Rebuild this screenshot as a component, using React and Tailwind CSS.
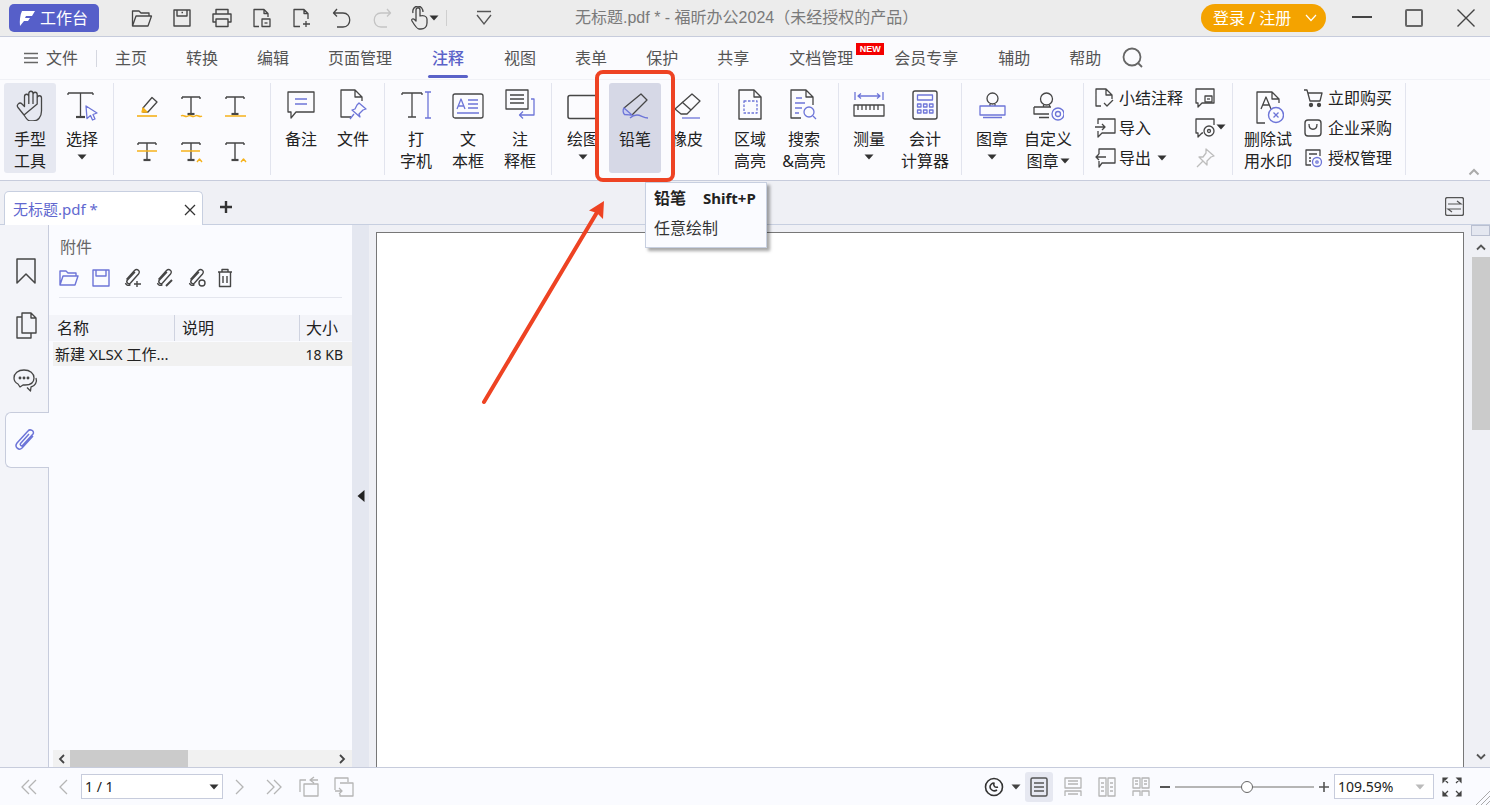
import React from 'react';

const C = '#464646', B = '#6d75d8', O = '#f6b21b';

function S({ w = 32, h = 32, sw = 1.3, stroke = C, children }) {
  return (
    <svg width={w} height={h} viewBox={`0 0 ${w} ${h}`} fill="none" stroke={stroke} strokeWidth={sw} strokeLinejoin="round" className="block shrink-0">
      {children}
    </svg>
  );
}

const Caret = ({ c = '#333' }) => (
  <svg width="10" height="6" viewBox="0 0 10 6" className="block shrink-0"><path d="M0.5 0.5H9.5L5 5.5Z" fill={c} /></svg>
);

const Sep = () => <div className="w-px h-[92px] bg-[#e2e4ee] shrink-0" />;

function Btn({ icon, lines = [], caret, active, hover, w = 'w-[52px]', inlineCaret }) {
  return (
    <div className={`${w} h-[90px] shrink-0 flex flex-col items-center rounded-[3px] ${active ? 'bg-[#e6e8f1]' : ''} ${hover ? 'bg-[#d6d8e6]' : ''}`}>
      <div className="h-[45px] pt-[6px] shrink-0">{icon}</div>
      {lines.map((l, i) => (
        <div key={i} className="h-[22px] leading-[22px] text-[16px] text-[#222] whitespace-nowrap flex items-center gap-[1px]">
          {l}{inlineCaret && i === lines.length - 1 ? <Caret /> : null}
        </div>
      ))}
      {caret ? <div className="mt-[4px]"><Caret /></div> : null}
    </div>
  );
}

function TIcon({ deco }) {
  return (
    <S w={26} h={30} sw={1.4}>
      <path d="M4 6H22M4 6V8M22 6V8M13 6V23" />
      <path d="M9.5 23H16.5" strokeWidth="2.2" />
      {deco}
    </S>
  );
}

const Icons = {
  hand: (
    <S>
      <path d="M10 26L4 18.5C2 16 5.5 12.5 8 15L10.5 17.5V7.5C10.5 4.5 14.8 4.5 14.8 7.5V15M14.8 15V4.5C14.8 1.5 19 1.5 19 4.5V15M19 15V5.5C19 2.5 23.2 2.5 23.2 5.5V15M23.2 15V9C23.2 6 27.5 6 27.5 9V22C27.5 28 24 32 19 32H16C13.5 32 11.5 28.5 10 26Z" />
    </S>
  ),
  select: (
    <S>
      <path d="M2 4H27M2 4V6M27 4V6M14.5 4V28" />
      <path d="M10 28H19" strokeWidth="2.2" />
      <path d="M20 17L31 24L27 25.5L29 30L26.5 31L24.5 26.5L21 29.5Z" stroke={B} />
    </S>
  ),
  note: (
    <S>
      <path d="M3 3H29V23H11L6 29V23H3Z" />
      <path d="M10 10H22M10 15H22" stroke={B} />
    </S>
  ),
  file: (
    <S>
      <path d="M14 28H4V1H18L25 8V12M18 1V8H25" />
      <path d="M22 14L29 20L26 21L22 25L23 28L15 21L18 20L20 16ZM17 25L13 30" stroke={B} />
    </S>
  ),
  typewriter: (
    <S>
      <path d="M2 4H22M2 4V6M22 4V6M12 4V28M8 28H16" />
      <path d="M25 3H31M25 29H31M28 3V29" stroke={B} />
    </S>
  ),
  textbox: (
    <S>
      <rect x="1" y="5" width="30" height="24" rx="2" />
      <path d="M5 20L9 10L13 20M6.5 17H11.5M16 11H26M16 15H26M16 19H26M5 24H27" stroke={B} />
    </S>
  ),
  callout: (
    <S>
      <path d="M24 20V1H2V20H24Z" />
      <path d="M6 6H20M6 10H20M6 14H20" />
      <path d="M27 10H30V26H16M19 22.5L15.5 26L19 29.5" stroke={B} />
    </S>
  ),
  rect: (
    <S>
      <rect x="1" y="6.5" width="31" height="23" rx="2" strokeWidth="1.5" />
    </S>
  ),
  pencil: (
    <S>
      <path d="M5 19L22 5L28 11L13 26" />
      <path d="M5 19C3.5 21 4 24 5.5 25.5C8.5 25.5 11 26 13 26Z" fill="#c9cdf0" stroke={B} />
      <path d="M11 29C13 27 16 26 18 26C22 26 24 29 29 29" stroke={B} />
    </S>
  ),
  eraser: (
    <S>
      <path d="M21 5L29 12L16 25H10L4 20Z" />
      <path d="M11 13L20 21" />
      <path d="M11 29H29" stroke={B} />
    </S>
  ),
  area: (
    <S>
      <path d="M5 1H20L27 8V30H5Z" strokeWidth="1.4" />
      <path d="M20 1V8H27" />
      <rect x="10" y="12" width="13" height="12" stroke={B} strokeDasharray="2.5 1.5" />
    </S>
  ),
  searchHi: (
    <S>
      <path d="M13 29H3V1H18L25 8V16M18 1V8H25" />
      <path d="M8 9H14M7 14H17M7 19H14M7 24H11" stroke={B} />
      <circle cx="21" cy="23" r="5" stroke={B} />
      <path d="M25 27L28 30" stroke={B} />
    </S>
  ),
  measure: (
    <S>
      <path d="M2 3V11M30 3V11M5 7H27M8 4.5L5 7L8 9.5M24 4.5L27 7L24 9.5" stroke={B} />
      <rect x="1" y="16" width="30" height="11" />
      <path d="M5 16V21M9 16V21M13 16V21M17 16V21M21 16V21M25 16V21" />
    </S>
  ),
  calc: (
    <S>
      <rect x="4" y="2" width="24" height="28" rx="2" strokeWidth="1.4" />
      <rect x="8.5" y="6" width="15" height="5" stroke={B} />
      <path d="M8.5 15H12V18H8.5ZM14.5 15H18V18H14.5ZM20.5 15H24V18H20.5ZM8.5 21H12V24H8.5ZM14.5 21H18V24H14.5ZM20.5 21H24V24H20.5Z" stroke={B} />
    </S>
  ),
  stamp: (
    <S>
      <circle cx="16.5" cy="9.5" r="5.5" />
      <path d="M14 15V17M19 15V17" />
      <path d="M4 17H29V26H4ZM7 28.5H26" stroke={B} />
    </S>
  ),
  stampGear: (
    <S>
      <circle cx="14.5" cy="10" r="6" />
      <path d="M11.5 16V18M17.5 16V18M2 18H19M2 18V25H17M7 28.5H17" />
      <circle cx="26" cy="25" r="6" stroke={B} />
      <circle cx="26" cy="25" r="2.5" stroke={B} />
    </S>
  ),
  watermark: (
    <S w={32} h={36}>
      <path d="M13 34H5V3H20L27 10V14M20 3V10H27" />
      <path d="M9 20L14 8L19 20M10.5 16H17.5" />
      <circle cx="24" cy="26" r="7.5" stroke={B} strokeWidth="1.4" />
      <path d="M21.5 23.5L26.5 28.5M26.5 23.5L21.5 28.5" stroke={B} />
    </S>
  ),
};

const Grid6 = () => {
  const cells = [
    <S w={26} h={30} key="a">
      <path d="M9 17L18 6.5L23 11L14 21H9Z" />
      <path d="M9 17L13 21H8Z" fill={O} stroke={O} />
      <path d="M3 25H23" stroke={O} strokeWidth="1.6" />
    </S>,
    <TIcon key="b" deco={<path d="M3 25C6 23 7 27 10 25C13 23 14 27 17 25C20 23 21 27 24 25" stroke={O} />} />,
    <TIcon key="c" deco={<path d="M3 25H24" stroke={O} strokeWidth="1.5" />} />,
    <TIcon key="d" deco={<path d="M3 14H23" stroke={O} strokeWidth="1.5" />} />,
    <TIcon key="e" deco={<><path d="M3 14H22" stroke={O} strokeWidth="1.5" /><path d="M19 25L21.5 22L24 25" stroke={O} /></>} />,
    <TIcon key="f" deco={<path d="M19 25L21.5 22L24 25" stroke={O} />} />,
  ];
  return (
    <div className="w-[132px] grid grid-cols-3 gap-y-[16px]">
      {cells.map((c, i) => <div key={i} className="h-[30px] flex justify-center">{c}</div>)}
    </div>
  );
};

function SmallRow({ icon, text, caret }) {
  return (
    <div className="h-[30px] flex items-center">
      <div className="w-[25px] shrink-0">{icon}</div>
      <span className="text-[16px] leading-[22px] text-[#222] whitespace-nowrap">{text}</span>
      {caret ? <div className="ml-[6px]"><Caret /></div> : null}
    </div>
  );
}

const Bubble = ({ children, d = 'M2 2H20V16H8L4 20V16H2Z' }) => (
  <S w={22} h={22}><path d={d} />{children}</S>
);

function Ribbon() {
  return (
    <div className="h-[101px] shrink-0 bg-[#fbfbfe] border-b border-[#c7ccdc] relative flex items-start pt-[3px]">
      <div className="w-[4px] shrink-0" />
      <Btn icon={Icons.hand} lines={['手型', '工具']} active />
      <Btn icon={Icons.select} lines={['选择']} caret />
      <div className="w-[5px]" /><Sep />
      <div className="w-[11px]" />
      <div className="pt-[8px]"><Grid6 /></div>
      <div className="w-[13px]" /><Sep />
      <div className="w-[4px]" />
      <Btn icon={Icons.note} lines={['备注']} />
      <Btn icon={Icons.file} lines={['文件']} />
      <div className="w-[5px]" /><Sep />
      <div className="w-[5px]" />
      <Btn icon={Icons.typewriter} lines={['打', '字机']} />
      <Btn icon={Icons.textbox} lines={['文', '本框']} />
      <Btn icon={Icons.callout} lines={['注', '释框']} />
      <div className="w-[5px]" /><Sep />
      <div className="w-[5px]" />
      <Btn icon={Icons.rect} lines={['绘图']} caret />
      <Btn icon={Icons.pencil} lines={['铅笔']} hover />
      <Btn icon={Icons.eraser} lines={['橡皮']} />
      <div className="w-[5px]" /><Sep />
      <div className="w-[5px]" />
      <Btn icon={Icons.area} lines={['区域', '高亮']} />
      <Btn w="w-[56px]" icon={Icons.searchHi} lines={['搜索', '&高亮']} />
      <div className="w-[6px]" /><Sep />
      <div className="w-[4px]" />
      <Btn icon={Icons.measure} lines={['测量']} caret />
      <div className="w-[2px]" />
      <Btn w="w-[56px]" icon={Icons.calc} lines={['会计', '计算器']} />
      <div className="w-[8px]" /><Sep />
      <div className="w-[4px]" />
      <Btn icon={Icons.stamp} lines={['图章']} caret />
      <div className="w-[2px]" />
      <Btn w="w-[56px]" icon={Icons.stampGear} lines={['自定义', '图章']} inlineCaret />
      <div className="w-[7px]" /><Sep />
      <div className="w-[10px]" />
      <div className="w-[92px] shrink-0">
        <SmallRow text="小结注释" icon={<S w={22} h={22}><path d="M7 19H2V2H12L18 8V12M12 2V8H18" /><path d="M10 16L13 19L19 13" /></S>} />
        <SmallRow text="导入" icon={<Bubble d="M4 7V2H21V16H8L4 20V14"><path d="M1 10H11M8 7L11 10L8 13" /></Bubble>} />
        <div className="h-[30px] flex items-center">
          <div className="w-[25px] shrink-0"><Bubble d="M5 7V2H21V16H8L5 20V14"><path d="M2 10H12M5 7L2 10L5 13" /></Bubble></div>
          <span className="text-[16px] text-[#222]">导出</span>
          <div className="ml-[6px]"><Caret /></div>
        </div>
      </div>
      <div className="w-[22px] shrink-0 mr-[12px] ml-[8px]">
        <div className="h-[30px] flex items-center"><Bubble><rect x="11" y="9" width="7" height="6" /><path d="M13 12H16" /></Bubble></div>
        <div className="h-[30px] flex items-center relative">
          <Bubble d="M20 8V2H2V16H4V20L8 16H9"><circle cx="15" cy="14" r="5" /><circle cx="15" cy="14" r="1.5" /></Bubble>
          <div className="absolute left-[22px] top-[11px]"><Caret /></div>
        </div>
        <div className="h-[30px] flex items-center">
          <S w={22} h={22} stroke="#bdbdbd"><path d="M12 2L20 9L17 10L13 14L13 18L5 10L9 10L12 6ZM9 14L3 20" /></S>
        </div>
      </div>
      <div className="w-[4px]" /><Sep />
      <div className="w-[9px]" />
      <Btn icon={Icons.watermark} lines={['删除试', '用水印']} />
      <div className="w-[9px]" />
      <div className="w-[102px] shrink-0">
        <SmallRow text="立即购买" icon={<S w={20} h={22}><path d="M1 3H4L7 14H17L19 6H5" /><circle cx="8" cy="18" r="1.5" fill={C} /><circle cx="16" cy="18" r="1.5" fill={C} /></S>} />
        <SmallRow text="企业采购" icon={<S w={20} h={22}><rect x="2" y="3" width="16" height="16" rx="3" strokeWidth="1.4" /><path d="M6 7C6 14 14 14 14 7" /></S>} />
        <SmallRow text="授权管理" icon={<S w={20} h={22}><path d="M8 18H3V3H17V9M6 7H14M6 11H8M6 14H8" /><circle cx="14" cy="15" r="4.5" stroke={B} /><circle cx="14" cy="15" r="1.2" stroke={B} /></S>} />
      </div>
      <Sep />
      <div className="absolute right-[10px] bottom-[4px]">
        <svg width="12" height="8" viewBox="0 0 12 8"><path d="M1.5 6.5L6 2L10.5 6.5" fill="none" stroke="#aaa" strokeWidth="2" /></svg>
      </div>
    </div>
  );
}

const tabs = [
  { t: '主页', m: '' }, { t: '转换', m: '' }, { t: '编辑', m: '' }, { t: '页面管理', m: '' },
  { t: '注释', m: 'mx-[1px]' }, { t: '视图', m: '' }, { t: '表单', m: '' }, { t: '保护', m: '' }, { t: '共享', m: '' },
  { t: '文档管理', m: 'ml-[1px] mr-[2px]' }, { t: '会员专享', m: 'mr-[1px]' }, { t: '辅助', m: '' }, { t: '帮助', m: '' },
];

function TabBar() {
  return (
    <div className="h-[43px] shrink-0 bg-[#fbfbfe] border-b border-[#f0f1f6] flex items-center pl-[24px] text-[16px] text-[#555]">
      <svg width="14" height="12" viewBox="0 0 14 12" className="block mr-[8px]"><path d="M0 1.5H14M0 6H14M0 10.5H14" stroke="#666" strokeWidth="1.4" /></svg>
      <span>文件</span>
      <div className="w-px h-[17px] bg-[#d5d7e0] mx-[18px]" />
      <div className="flex gap-[39px] items-center">
        {tabs.map(({ t, m }) => (
          <div key={t} className={`relative whitespace-nowrap ${m} ${t === '注释' ? 'text-[#5a62c8] font-medium' : ''}`}>
            {t}
            {t === '注释' ? <div className="absolute left-[-4px] right-[-4px] top-[29px] h-[3px] rounded-full bg-[#5a62c8]" /> : null}
            {t === '文档管理' ? (
              <div className="absolute left-[67px] top-[-3px] w-[28px] h-[12px] bg-[#f40000] text-white text-[9px] leading-[12px] font-bold text-center font-['Liberation_Sans',sans-serif]">NEW</div>
            ) : null}
          </div>
        ))}
      </div>
      <svg width="24" height="24" viewBox="0 0 24 24" className="block ml-[20px]" fill="none" stroke="#666" strokeWidth="1.8"><circle cx="11" cy="11" r="8.5" /><path d="M17 17L21 21" /></svg>
    </div>
  );
}

function TitleBar() {
  const Q = ({ children, w = 'w-[40px]' }) => <div className={`${w} h-[36px] flex items-center justify-center shrink-0`}>{children}</div>;
  return (
    <div className="h-[37px] shrink-0 bg-[#ececec] border-b border-[#c7ccdc] flex items-center relative">
      <div className="ml-[9px] w-[90px] h-[28px] rounded-[5px] bg-[#565fc9] flex items-center text-white text-[16px] shrink-0">
        <svg width="18" height="18" viewBox="0 0 18 18" className="block ml-[9px] mr-[4px]"><path d="M4 2H17L14 7H8L7 9H12L10 12H6L2 17C1.5 12 2 6 4 2Z" fill="#fff" /></svg>
        工作台
      </div>
      <div className="w-[23px]" />
      <Q><S w={22} h={20}><path d="M1.5 18V3H8L10 5H18V8M1.5 18H17L20.5 8H5L1.5 18Z" /></S></Q>
      <Q><S w={20} h={20}><path d="M2 2H18V18H2ZM5 2V8H15V2" strokeWidth="1.4" /><path d="M9.5 4.5H11" /></S></Q>
      <Q><S w={22} h={20}><path d="M5 6V1.5H17V6M5 14H2V6H20V14H17M5 11H17V18.5H5Z" strokeWidth="1.4" /></S></Q>
      <Q><S w={20} h={20}><path d="M7 18.5H2V1.5H12L16 5.5V9M12 1.5V5.5H16" /><rect x="10" y="11" width="8" height="7.5" /><path d="M12.5 15H15.5" /></S></Q>
      <Q><S w={20} h={20}><path d="M8 18.5H2V1.5H12L16 5.5V11M12 1.5V5.5H16M14 13V19M11 16H18" /></S></Q>
      <Q><S w={20} h={22}><path d="M5 2L1.5 6L5 9.5M1.5 6H11C20 6 20 20 11 20H5" /></S></Q>
      <Q><S w={20} h={22} stroke="#c4c4c4"><path d="M15 2L18.5 6L15 9.5M18.5 6H9C0 6 0 20 9 20H15" /></S></Q>
      <Q w="w-[36px]">
        <S w={20} h={24}><path d="M6 8V4C6 1 10 1 10 4V10C13 9 17 10 17 13V17C17 21 14 23 11 23H9C7 23 5 20 2 15C1 13 3 12 5 14L6 15V8ZM3 7C2 3 5 0 8 0C11 0 13 3 13 6" /></S>
      </Q>
      <div className="ml-[-9px]"><Caret /></div>
      <div className="w-px h-[16px] bg-[#cfcfcf] ml-[7px]" />
      <div className="ml-[28px]">
        <svg width="18" height="16" viewBox="0 0 18 16" fill="none" stroke="#555" strokeWidth="1.3"><path d="M2 1.5H16M2 5L9 14L16 5" /></svg>
      </div>
      <div className="absolute left-[575px] top-0 h-[36px] leading-[36px] text-[16px] text-[#7a7a7a] whitespace-nowrap font-['Liberation_Sans','Noto_Sans_CJK_SC',sans-serif]">无标题.pdf * - 福昕办公2024（未经授权的产品）</div>
      <div className="ml-auto mr-[164px] w-[125px] h-[28px] rounded-full bg-[#f4a300] text-white text-[16px] flex items-center pl-[12px] shrink-0 whitespace-nowrap">
        登录 / 注册
        <svg width="12" height="8" viewBox="0 0 12 8" className="block ml-[14px]" fill="none" stroke="#fff" strokeWidth="1.2"><path d="M1 1L6 6.5L11 1" /></svg>
      </div>
      <div className="absolute left-[1352px] top-[16px] w-[20px] h-[2px] bg-[#444]" />
      <div className="absolute left-[1405px] top-[9px] w-[18px] h-[18px] border-2 border-[#666] rounded-[2px]" />
      <svg width="18" height="18" viewBox="0 0 18 18" className="absolute left-[1457px] top-[9px]" fill="none" stroke="#444" strokeWidth="1.4"><path d="M0.5 0.5L17.5 17.5M17.5 0.5L0.5 17.5" /></svg>
    </div>
  );
}

function DocTabs() {
  return (
    <div className="h-[44px] shrink-0 bg-[#eff0f5] border-b border-[#c7cfe0] flex items-end pl-[4px] relative">
      <div className="w-[199px] h-[34px] -mb-px bg-white border border-b-0 border-[#c7cfe0] rounded-t-[5px] flex items-center pl-[8px] pt-[2px] relative">
        <span className="text-[15px] text-[#6168cf]">无标题.pdf *</span>
        <svg width="12" height="12" viewBox="0 0 12 12" className="absolute right-[6px] top-[12px]" fill="none" stroke="#333" strokeWidth="1.3"><path d="M1 1L11 11M11 1L1 11" /></svg>
      </div>
      <svg width="14" height="14" viewBox="0 0 14 14" className="block ml-[16px] mb-[10px]" fill="none" stroke="#333" strokeWidth="2.4"><path d="M7 1V13M1 7H13" /></svg>
      <div className="absolute left-[1445px] top-[16px]">
        <svg width="19" height="19" viewBox="0 0 19 19" fill="none" stroke="#555" strokeWidth="1.2"><rect x="0.5" y="0.5" width="18" height="18" rx="2" strokeWidth="1.4" /><path d="M3 7H16L12 4M16 12H3L7 15" /></svg>
      </div>
    </div>
  );
}

function Rail() {
  return (
    <div className="w-[49px] shrink-0 flex flex-col bg-[#f3f4f9]">
      <div className="h-[187px] border-r border-[#c7ccdc] flex flex-col items-center pl-[3px] pt-[32px] shrink-0">
        <S w={22} h={28} sw={1.5}><path d="M2 2H20V26L11 17L2 26Z" /></S>
        <div className="h-[27px]" />
        <S w={22} h={27} sw={1.4}><path d="M7 21V1H16L21 6V21ZM16 1V6H21M7 5H2V26H16V21" /></S>
        <div className="h-[29px]" />
        <div className="-ml-[2px]"><S w={26} h={24} sw={1.3}><path d="M12 2C6 2 2 5.5 2 10C2 13 4 15 6 16L8 19L11 17H13C19 17 22 14 22 10C22 5.5 18 2 12 2Z" /><path d="M24 10C25.5 14 23 18 19 19L18.5 23L15 19.5" /><circle cx="8" cy="10" r="0.8" fill={C} /><circle cx="12" cy="10" r="0.8" fill={C} /><circle cx="16" cy="10" r="0.8" fill={C} /></S></div>
      </div>
      <div className="h-[56px] ml-[5px] bg-[#fafbff] border border-r-0 border-[#c7ccdc] rounded-l-[6px] flex items-center justify-center pr-[5px] shrink-0">
        <S w={24} h={26} sw={1.5} stroke={B}><path d="M20 9L9 21C6 24 1 20 4 16L15 4C17 1.5 22 4 20 7L9.5 18.5C8.5 19.5 6.5 18 7.5 16.5L16 7" /></S>
      </div>
      <div className="flex-1 border-r border-[#c7ccdc]" />
    </div>
  );
}

const Clip = ({ children, stroke = C }) => (
  <S w={20} h={22} stroke={stroke} sw={1.4}>
    <path d="M3.5 12.5L11.5 3.5C14 1 18 4 15.5 7L7.5 16C5.5 18 2.5 15 4.5 13L12 5M6 16.5L7 18C5 19 3 18 2.5 16" />
    {children}
  </S>
);

function Panel() {
  return (
    <div className="w-[303px] shrink-0 bg-[#fafbff] flex flex-col">
      <div className="h-[39px] pl-[11px] pt-[11px] text-[16px] leading-[22px] text-[#666] shrink-0">附件</div>
      <div className="h-[28px] flex items-center pl-[10px] shrink-0 gap-[12px]">
        <S w={20} h={18} stroke={B} sw={1.4}><path d="M1 16V2H7L9 4H17V7M1 16H16L19 7H4L1 16Z" /></S>
        <S w={20} h={18} stroke={B} sw={1.4}><path d="M2 1H18V17H2ZM5 1V7H15V1" /></S>
        <Clip><path d="M14 14V20M11 17H18" /></Clip>
        <Clip><path d="M11 19L17 13" strokeWidth="2" /></Clip>
        <Clip><circle cx="15" cy="16" r="3" /></Clip>
        <div className="-ml-[2px]"><S w={16} h={20}><path d="M1 4H15M5 4V1.5H11V4M2.5 4V18.5H13.5V4M6 8V15M10 8V15" strokeWidth="1.4" /></S></div>
      </div>
      <div className="mx-[10px] h-px bg-[#e4e6ee] mt-[5px] shrink-0" />
      <div className="h-[26px] mt-[17px] bg-[#f3f4f9] flex text-[16px] leading-[26px] text-[#222] shrink-0">
        <div className="w-[126px] pl-[8px] border-r border-[#cfd3e0]">名称</div>
        <div className="w-[125px] pl-[7px] border-r border-[#cfd3e0]">说明</div>
        <div className="pl-[6px]">大小</div>
      </div>
      <div className="h-[24px] ml-[4px] bg-[#f1f1f1] flex items-center justify-between text-[15px] text-[#222] pl-[2px] pr-[9px] shrink-0 mt-px whitespace-nowrap">
        <span>新建 XLSX 工作...</span>
        <span className="text-[14px]">18 KB</span>
      </div>
      <div className="flex-1" />
      <div className="h-[17px] bg-[#f1f1f1] flex items-center shrink-0 ml-[4px]">
        <div className="w-[17px] flex justify-center"><svg width="7" height="10" viewBox="0 0 7 10" fill="none" stroke="#444" strokeWidth="1.8"><path d="M6 1L2 5L6 9" /></svg></div>
        <div className="w-[118px] h-full bg-[#cbcbcb]" />
        <div className="flex-1" />
        <div className="w-[19px] flex justify-center"><svg width="7" height="10" viewBox="0 0 7 10" fill="none" stroke="#444" strokeWidth="1.8"><path d="M1 1L5 5L1 9" /></svg></div>
      </div>
    </div>
  );
}

function DocArea() {
  return (
    <div className="flex-1 bg-[#eff0f5] flex min-w-0">
      <div className="w-[17px] bg-[#e4e7f0] shrink-0 flex items-center justify-center">
        <svg width="8" height="12" viewBox="0 0 8 12"><path d="M7.5 0V12L0.5 6Z" fill="#222" /></svg>
      </div>
      <div className="flex-1 pl-[7px] pr-[7px] pt-[7px] min-w-0">
        <div className="h-full bg-white border border-b-0 border-[#777]" />
      </div>
      <div className="w-[19px] shrink-0 flex flex-col items-stretch">
        <div className="h-[11px] bg-[#e4e7f0] border border-[#b9bfd0]" />
        <div className="h-[21px] flex items-center justify-center"><svg width="12" height="8" viewBox="0 0 12 8" fill="none" stroke="#555" strokeWidth="1.8"><path d="M2 6.5L6 2.5L10 6.5" /></svg></div>
        <div className="h-[173px] bg-[#cbcbcb] ml-px" />
        <div className="flex-1" />
        <div className="h-[21px] flex items-center justify-center"><svg width="12" height="8" viewBox="0 0 12 8" fill="none" stroke="#555" strokeWidth="1.8"><path d="M2 1.5L6 5.5L10 1.5" /></svg></div>
      </div>
    </div>
  );
}

function StatusBar() {
  const G = '#b5b5b5';
  const Box = ({ children, w = 'w-[34px]' }) => <div className={`${w} h-[24px] flex items-center justify-center shrink-0`}>{children}</div>;
  return (
    <div className="h-[38px] shrink-0 bg-[#fafbff] border-t border-[#c7ccdc] flex items-center pl-[12px] relative">
      <Box><svg width="18" height="16" viewBox="0 0 18 16" fill="none" stroke={G} strokeWidth="1.3"><path d="M9 1L2 8L9 15M16 1L9 8L16 15" /></svg></Box>
      <Box><svg width="10" height="16" viewBox="0 0 10 16" fill="none" stroke={G} strokeWidth="1.3"><path d="M9 1L2 8L9 15" /></svg></Box>
      <div className="w-[142px] h-[25px] ml-px bg-white border border-[#c7ccdc] flex items-center pl-[3px] text-[14px] text-[#222] justify-between pr-[3px] shrink-0">
        <span>1 / 1</span><Caret />
      </div>
      <Box><svg width="10" height="16" viewBox="0 0 10 16" fill="none" stroke={G} strokeWidth="1.3"><path d="M1 1L8 8L1 15" /></svg></Box>
      <Box><svg width="18" height="16" viewBox="0 0 18 16" fill="none" stroke={G} strokeWidth="1.3"><path d="M2 1L9 8L2 15M9 1L16 8L9 15" /></svg></Box>
      <Box w="w-[36px]"><S w={22} h={22} stroke={G}><path d="M8 4H2V16M6 8H20V20H6ZM16 1L12 4L16 7M12 4H20" /></S></Box>
      <Box><S w={22} h={22} stroke={G}><path d="M2 14V2H15V6M7 7H20V20H7V18M2 15H9M6 12L9 15L6 18" /></S></Box>
      <div className="ml-auto flex items-center pr-[28px] shrink-0">
        <S w={20} h={20} sw={1.6} stroke="#333"><circle cx="10" cy="10" r="8.5" /><path d="M13 13C10 15 6 13 6 10C6 8 8 6 10 6C9 9 11 11 14 10" /></S>
        <div className="ml-[7px] mr-[4px]"><Caret c="#444" /></div>
        <div className="w-[28px] h-[30px] mr-[3px] bg-[#e6e8f1] rounded-[3px] flex items-center justify-center">
          <S w={18} h={20} stroke="#555" sw={1.5}><rect x="1" y="1" width="16" height="18" rx="1.5" /><path d="M4 6H14M4 10H14M4 14H14" /></S>
        </div>
        <Box><S w={18} h={20} stroke={G}><path d="M1 1H17V11H1ZM4 4H14M4 7H14M1 19V14H17V19M4 17H14" /></S></Box>
        <Box><S w={18} h={20} stroke={G}><path d="M1 1H8V19H1ZM10 1H17V19H10ZM3 6H6M3 10H6M3 14H6M12 6H15M12 10H15M12 14H15" /></S></Box>
        <Box><S w={18} h={20} stroke={G}><path d="M1 1H8V11H1ZM10 1H17V11H10ZM3 4H6M3 7H6M12 4H15M12 7H15M1 19V14H8V19M10 19V14H17V19" /></S></Box>
        <div className="w-[10px] h-[2px] bg-[#555] ml-[2px]" />
        <div className="w-[139px] h-[2px] bg-[#b5b5b5] mx-[5px] relative">
          <div className="absolute left-[66px] top-[-5px] w-[12px] h-[12px] rounded-full bg-white border border-[#666]" />
        </div>
        <svg width="10" height="10" viewBox="0 0 10 10" stroke="#555" strokeWidth="1.6"><path d="M5 0V10M0 5H10" /></svg>
        <div className="w-[100px] h-[25px] ml-[5px] bg-white border border-[#c7ccdc] flex items-center justify-between pl-[3px] pr-[8px] text-[14px] text-[#222]">
          <span>109.59%</span><Caret c="#bbb" />
        </div>
        <svg width="20" height="20" viewBox="0 0 20 20" className="block ml-[8px]" fill="#444" stroke="#444" strokeWidth="1.2"><path d="M1 1H5L1 5ZM2 2L6 6M19 1H15L19 5ZM18 2L14 6M1 19H5L1 15ZM2 18L6 14M19 19H15L19 15ZM18 18L14 14" /></svg>
      </div>
      <svg width="14" height="14" viewBox="0 0 14 14" className="absolute right-0 bottom-0" stroke="#aaa" strokeWidth="1"><path d="M14 0L0 14M14 5L5 14M14 10L10 14" /></svg>
    </div>
  );
}

export default function App() {
  return (
    <div className="w-[1490px] h-[805px] overflow-hidden relative flex flex-col bg-[#fbfbfe] font-['Noto_Sans','Noto_Sans_CJK_SC',sans-serif]">
      <TitleBar />
      <TabBar />
      <Ribbon />
      <DocTabs />
      <div className="flex-1 flex min-h-0">
        <Rail />
        <Panel />
        <DocArea />
      </div>
      <StatusBar />

      <div className="absolute left-[595px] top-[70px] w-[80px] h-[112px] border-4 border-[#ee4323] rounded-[8px]" />
      <div className="absolute left-[645px] top-[182px] w-[122px] h-[66px] bg-[#fafbff] border border-[#c7cfe0] shadow-[3px_3px_3px_rgba(0,0,0,0.35)] pl-[8px] pt-[2px]">
        <div className="flex items-center h-[26px] text-[16px] font-bold text-[#222] whitespace-nowrap">
          <span>铅笔</span><span className="ml-[17px] text-[15px]">Shift+P</span>
        </div>
        <div className="text-[16px] leading-[30px] text-[#333] mt-[2px]">任意绘制</div>
      </div>
      <svg width="1490" height="805" viewBox="0 0 1490 805" className="absolute left-0 top-0 pointer-events-none">
        <path d="M484 402L599 209" stroke="#ee4323" strokeWidth="4" strokeLinecap="round" />
        <path d="M604 201L589 210.5L597 213L603 219Z" fill="#ee4323" />
      </svg>
    </div>
  );
}
